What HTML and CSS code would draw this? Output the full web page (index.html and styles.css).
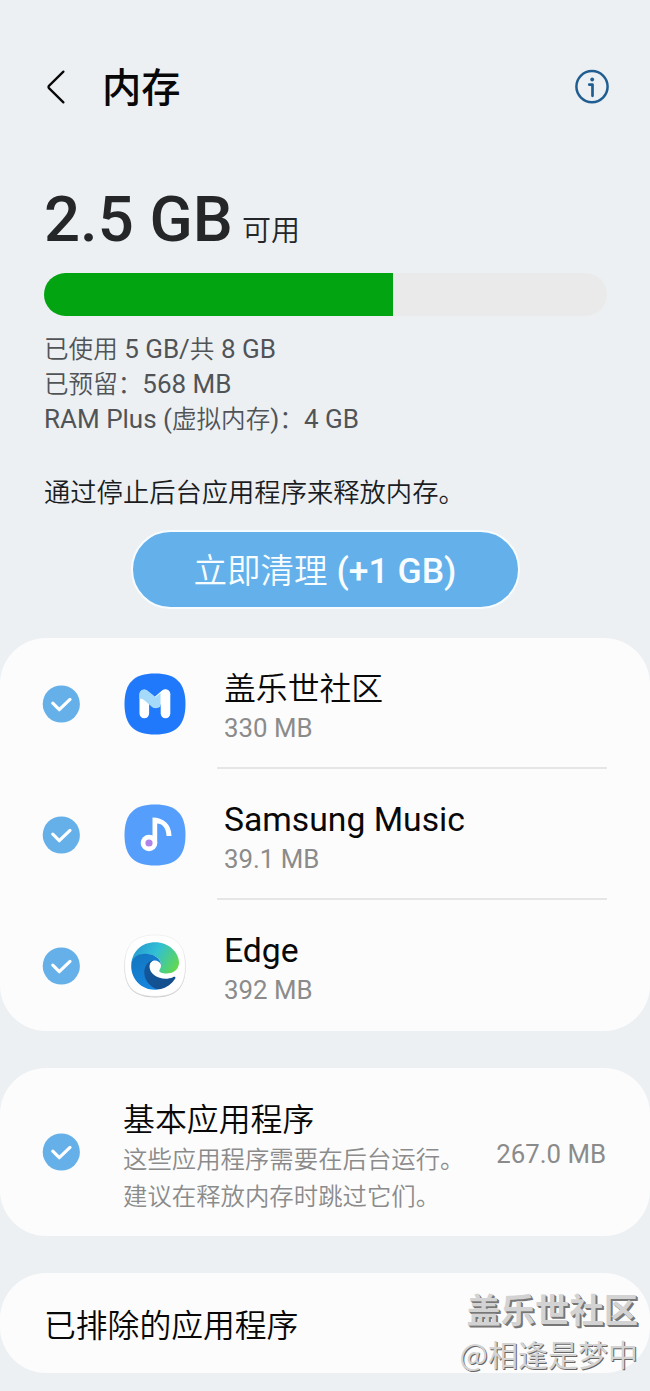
FILE: index.html
```html
<!DOCTYPE html>
<html lang="zh-CN">
<head>
<meta charset="utf-8">
<title>内存</title>
<link rel="stylesheet" href="styles.css">
</head>
<body>
<svg width="0" height="0" class="defs">
  <symbol id="check" viewBox="0 0 38 38">
    <circle cx="19.300" cy="19" r="18.600" fill="#65b0e9"/>
    <path d="M12.700 18.400 19.200 24.900 29.900 14.600" transform="translate(-1.900 -.2)" fill="none" stroke="#fff" stroke-width="3.200" stroke-linecap="round" stroke-linejoin="round"/>
  </symbol>
</svg>
<div class="screen">
  <header class="header">
    <svg class="back" viewBox="0 0 20 36"><path d="M17.400 2.600 3.200 16.600Q1.800 18 3.200 19.400L17.400 33.400" fill="none" stroke="#080808" stroke-width="2.300" stroke-linecap="round"/></svg>
    <h1 class="title">内存</h1>
    <svg class="info" viewBox="0 0 36 36"><circle cx="18" cy="17.600" r="15.600" fill="none" stroke="#205d91" stroke-width="2.500"/><circle cx="18.200" cy="10.500" r="1.900" fill="#205d91"/><path d="M15.200 15.600H18.500V26.800" fill="none" stroke="#205d91" stroke-width="2.700" stroke-linecap="round" stroke-linejoin="round"/></svg>
  </header>

  <section class="summary">
    <div class="free"><span class="amount">2.5 GB</span><span class="unit">可用</span></div>
    <div class="bar"><div class="used"></div></div>
    <div class="details">
      <p><span class="zh">已使用</span> 5 GB/<span class="zh">共</span> 8 GB</p>
      <p><span class="zh">已预留：</span>568 MB</p>
      <p>RAM Plus (<span class="zh">虚拟内存</span>)<span class="zh">：</span>4 GB</p>
    </div>
    <p class="hint">通过停止后台应用程序来释放内存。</p>
    <button class="clean"><span class="zh">立即清理</span> (+1 GB)</button>
  </section>

  <section class="card">
    <div class="row">
      <svg class="check"><use href="#check"/></svg>
      <svg class="app" viewBox="0 0 64 64">
        <path d="M32 1.500C53 1.500 62.500 11 62.500 32S53 62.500 32 62.500 1.500 53 1.500 32 11 1.500 32 1.500Z" fill="#2079fa"/>
        <path d="M21.300 22.500V41.500M42.500 22.500V41.500" stroke="#fff" stroke-width="9.600" stroke-linecap="round"/>
        <path d="M42.500 22 32 31" stroke="#fff" stroke-width="9.600" stroke-linecap="round"/>
        <path d="M16.500 27V22C16.500 17.300 22 16 25 19L32.500 25 37.500 21V34.500C34 37 30.500 36.500 28 34L21 28Q18.500 26 16.500 27Z" fill="#a5dafa"/>
      </svg>
      <div class="text"><h2><span class="zh">盖乐世社区</span></h2><p>330 MB</p></div>
    </div>
    <div class="row">
      <svg class="check"><use href="#check"/></svg>
      <svg class="app" viewBox="0 0 64 64">
        <path d="M32 1.500C53 1.500 62.500 11 62.500 32S53 62.500 32 62.500 1.500 53 1.500 32 11 1.500 32 1.500Z" fill="#559efb"/>
        <path d="M29.500 14.600C40 14.600 48.500 21 48.500 33H43.500C43.500 25 39 20.500 34.200 20.500V40H29.500Z" fill="#fff"/>
        <circle cx="26" cy="40" r="8.300" fill="#fff"/><circle cx="26" cy="40" r="3.600" fill="#b083e8"/>
      </svg>
      <div class="text"><h2>Samsung Music</h2><p>39.1 MB</p></div>
    </div>
    <div class="row">
      <svg class="check"><use href="#check"/></svg>
      <svg class="app" viewBox="0 0 64 64">
        <defs>
          <linearGradient id="wave" x1="0" y1=".3" x2="1" y2=".7"><stop offset="0" stop-color="#2799d2"/><stop offset=".45" stop-color="#31bfd5"/><stop offset="1" stop-color="#61d84f"/></linearGradient>
          <linearGradient id="body" x1="0" y1="0" x2=".5" y2="1"><stop offset="0" stop-color="#1375be"/><stop offset="1" stop-color="#1586df"/></linearGradient>
          <linearGradient id="tail" x1="0" y1="0" x2="1" y2="1"><stop offset="0" stop-color="#12599e"/><stop offset="1" stop-color="#154c89"/></linearGradient>
        </defs>
        <path d="M32 2.400C53 2.400 62.600 11.800 62.600 32.800S53 63.500 32 63.500 1.400 53.800 1.400 32.800 11 2.400 32 2.400Z" fill="#c9c9c9"/>
        <path d="M32 1C53 1 62.300 11 62.300 32S53 62.300 32 62.300 1.700 53 1.700 32 11 1 32 1Z" fill="#fff" stroke="#e7e7e7" stroke-width=".6"/>
        <path d="M8.200 31C9 17 19 8.200 32 8.200C46 8.200 56 18.500 56 28.500C56 36.500 49 39.500 43.500 39.500C39 39.500 36.300 38.500 36.300 36.800C36.300 35.500 38 34.500 38 31C38 26 34 20 22 20C14 20 9 25 8.200 31Z" fill="url(#wave)"/>
        <path d="M8.200 32C8.200 24 14 19.700 22 19.700C31 19.700 38 24.500 38 31C36 24.500 26 25 26 33C26 44 35 50 44 50L35 55.500C20 57.500 8.200 46 8.200 32Z" fill="url(#body)"/>
        <path d="M30 26.300C19 29 19 44 27 51C31 55 36 56 39.500 54.500C46 52.500 50 48 52.300 44.500C53 43 51.500 42.300 50 43.200C40 47.500 26.500 42 26.500 32.500C26.500 30 28 27.500 30 26.300Z" fill="url(#tail)"/>
      </svg>
      <div class="text"><h2>Edge</h2><p>392 MB</p></div>
    </div>
  </section>

  <section class="card basic">
    <svg class="check"><use href="#check"/></svg>
    <div class="basic-text"><h2>基本应用程序</h2><p>这些应用程序需要在后台运行。</p><p>建议在释放内存时跳过它们。</p></div>
    <span class="size">267.0 MB</span>
  </section>

  <section class="card excluded"><h2>已排除的应用程序</h2></section>

  <div class="watermark"><div class="site">盖乐世社区</div><div class="user">@相逢是梦中</div></div>
</div>
</body>
</html>
```
FILE: styles.css
```css
* { box-sizing: border-box; }
body { margin: 0; background: #ecf0f3; }
h1, h2, p { margin: 0; font-weight: 400; }
.defs { position: absolute; }
.screen {
  position: relative;
  width: 650px;
  height: 1391px;
  overflow: hidden;
  font-family: Roboto, "Noto Sans CJK SC", sans-serif;
  color: #080808;
}
.zh, .unit, .hint, .basic-text h2, .basic-text p, .excluded h2 {
  font-family: "Noto Sans CJK SC DemiLight", "Noto Sans CJK SC", sans-serif;
  font-weight: 350;
}
.zh { font-size: .945em; line-height: 1; }
.header { display: flex; align-items: center; height: 174px; padding: 0 40px 0 46px; }
.back { width: 20px; height: 36px; }
.title { flex: 1; margin-left: 36px; padding-top: 4px; font-size: 39.300px; font-weight: 500; line-height: 60px; }
.info { width: 36px; height: 36px; }

.summary { display: flex; flex-direction: column; height: 464px; padding: 0 43px 0 44px; }
.free { display: flex; align-items: baseline; height: 99px; padding-top: 8px; line-height: 75px; white-space: nowrap; color: #242628; }
.amount { font-size: 63.500px; font-weight: 500; }
.unit { margin-left: 9px; font-size: 29px; }
.bar { height: 43px; overflow: hidden; border-radius: 22px; background: #eaeaea; }
.used { width: 349px; height: 100%; background: #03a412; }
.details { margin-top: 16px; font-size: 26px; line-height: 35px; color: #515457; }
.details p { height: 35px; white-space: nowrap; }
.hint { margin-top: 31px; height: 45px; font-size: 26.300px; line-height: 45px; color: #1b1d1f; white-space: nowrap; }
.clean {
  align-self: center;
  width: 389px;
  height: 79px;
  margin: 17px 1px 0 0;
  padding: 4px 0 0;
  border: 2px solid #f6fcff;
  border-radius: 40px;
  background: #64b0ea;
  color: #f8fdff;
  font: 500 35.500px/71px Roboto, "Noto Sans CJK SC", sans-serif;
}

.card { margin-bottom: 37px; border-radius: 46px; background: #fcfcfc; }
.row { display: flex; align-items: center; height: 131px; padding: 0 43px 0 42px; }
.check { flex: none; width: 38px; height: 38px; }
.app { flex: none; width: 64px; height: 64px; margin-left: 43px; }
.text { flex: 1; height: 131px; margin-left: 30px; padding: 27px 0 0 7px; border-bottom: 2px solid #e6e6e6; }
.row:last-child .text { border-bottom: 0; }
.text h2 { height: 47px; font-size: 33.700px; line-height: 48px; }
.text p { height: 32px; font-size: 25.800px; line-height: 32px; color: #8b8b8b; }

.basic { display: flex; align-items: center; height: 168px; padding: 0 44px 0 42px; }
.basic-text { flex: 1; margin-left: 43px; padding-top: 4px; white-space: nowrap; }
.basic-text h2 { font-size: 31.900px; line-height: 42px; margin-bottom: 1px; }
.basic-text p { font-size: 24.400px; line-height: 37px; color: #8b8b8b; }
.size { padding-top: 3px; font-size: 25.800px; color: #8b8b8b; }
.excluded { height: 100px; padding-left: 44px; }
.excluded h2 { font-size: 31.800px; line-height: 101px; }

.watermark { position: absolute; right: 12px; top: 1284px; text-align: right; white-space: nowrap; }
.site { height: 47px; font: 700 34.300px/48px "Noto Sans CJK SC", sans-serif; color: #d3d3d3; text-shadow: 1px 1px 0 #777, 2px 2px 0 #777; }
.user { height: 44px; font: 400 30px/44px "Noto Sans CJK SC", sans-serif; color: #d3d3d3; text-shadow: 1px 1px 0 #666; }
```
